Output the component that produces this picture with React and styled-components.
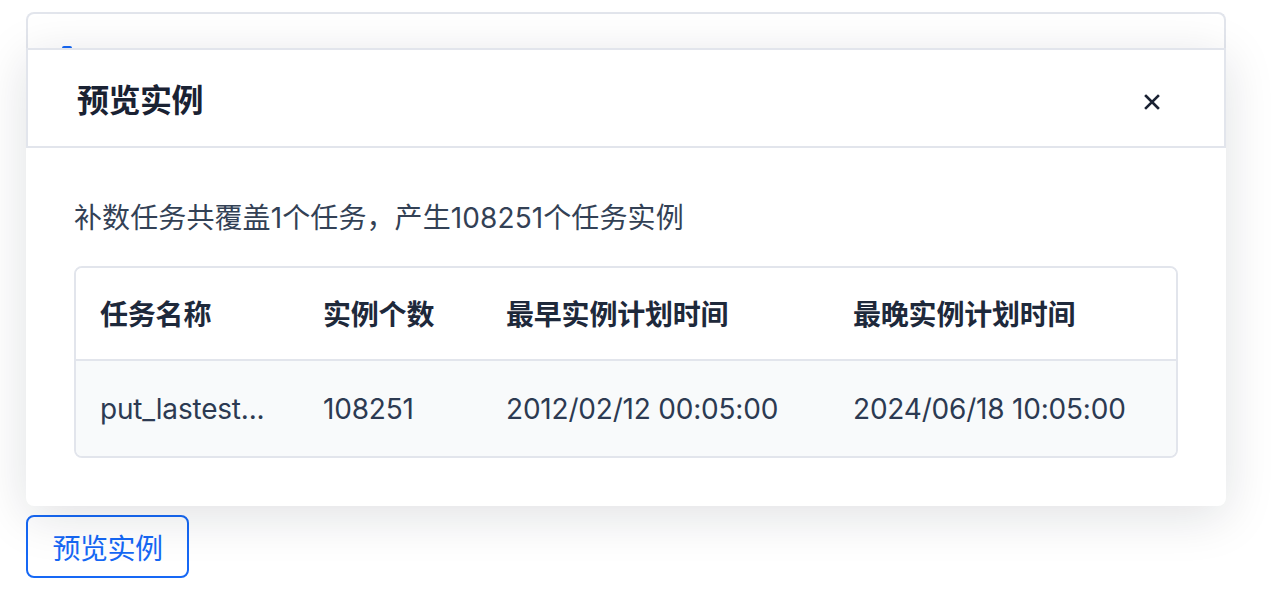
import React from "react";
import styled, { createGlobalStyle } from "styled-components";

const GlobalStyle = createGlobalStyle`
  html, body { margin: 0; padding: 0; background: #ffffff; }
  body {
    font-family: Inter, "Noto Sans CJK SC", "Noto Sans", sans-serif;
    -webkit-font-smoothing: antialiased;
  }
  * { box-sizing: border-box; }
`;

const Page = styled.div`
  width: 1276px;
  height: 606px;
  overflow: hidden;
  padding: 12px 50px 0 26px;
  display: flex;
  flex-direction: column;
  align-items: flex-start;
`;

const CardTop = styled.div`
  width: 1200px;
  height: 36px;
  border: 2px solid #e2e5ec;
  border-bottom: none;
  border-radius: 8px 8px 0 0;
  background: #ffffff;
  display: flex;
  align-items: flex-end;
  padding-left: 34px;
`;

const TabMark = styled.span`
  display: block;
  width: 10px;
  height: 2px;
  border-radius: 2px 2px 0 0;
  background: #1668f5;
`;

const Modal = styled.div`
  position: relative;
  z-index: 2;
  width: 1200px;
  background: #ffffff;
  border-radius: 0 0 8px 8px;
  box-shadow: 0 10px 50px rgba(15, 23, 42, 0.13);
  display: flex;
  flex-direction: column;
`;

const Header = styled.div`
  height: 100px;
  border: 2px solid #e2e5ec;
  padding: 0 48px 0 49px;
  display: flex;
  align-items: center;
  justify-content: space-between;
`;

const Title = styled.h2`
  margin: 0;
  font-size: 32px;
  font-weight: 700;
  color: #1a2233;
  letter-spacing: -0.5px;
`;

const CloseButton = styled.button`
  border: none;
  background: none;
  padding: 0;
  margin-right: 15px;
  margin-top: 8px;
  width: 18px;
  height: 18px;
  display: flex;
  align-items: center;
  justify-content: center;
  cursor: pointer;
  color: #1a2233;
`;

const Body = styled.div`
  padding: 50px 48px 48px 48px;
  display: flex;
  flex-direction: column;
  gap: 28px;
`;

const Summary = styled.p`
  margin: 0;
  font-size: 28px;
  line-height: 40px;
  color: #334155;
  letter-spacing: 0.1px;
`;

const TableBox = styled.div`
  border: 2px solid #e2e5ec;
  border-radius: 8px;
  overflow: hidden;
`;

const Row = styled.div`
  display: grid;
  grid-template-columns: 223px 183px 347px 1fr;
  align-items: center;
  height: ${(p) => (p.$head ? "93px" : "95px")};
  background: ${(p) => (p.$head ? "#ffffff" : "#f8fafb")};
  border-bottom: ${(p) => (p.$head ? "2px solid #e2e5ec" : "none")};
  padding-bottom: ${(p) => (p.$head ? "2px" : "0")};
`;

const Cell = styled.div`
  padding-left: 24px;
  font-size: 28px;
  font-weight: ${(p) => (p.$head ? 700 : 400)};
  color: ${(p) => (p.$head ? "#1e293b" : "#2c3a52")};
  white-space: nowrap;
  letter-spacing: ${(p) => (p.$head ? "-0.2px" : "-0.2px")};
`;

const PreviewButton = styled.button`
  margin-top: 9px;
  width: 163px;
  height: 63px;
  border: 2px solid #1668f5;
  border-radius: 8px;
  background: transparent;
  color: #1668f5;
  font-family: inherit;
  font-size: 28px;
  letter-spacing: -0.5px;
  cursor: pointer;
  padding: 0;
`;

const CloseIcon = () => (
  <svg width="16" height="16" viewBox="0 0 16 16" fill="none">
    <path d="M2 2 L14 14 M14 2 L2 14" stroke="currentColor" strokeWidth="2.6" strokeLinecap="square" />
  </svg>
);

const columns = ["任务名称", "实例个数", "最早实例计划时间", "最晚实例计划时间"];
const rows = [["put_lastest...", "108251", "2012/02/12 00:05:00", "2024/06/18 10:05:00"]];

export default function App() {
  return (
    <>
      <GlobalStyle />
      <Page>
        <CardTop>
          <TabMark />
        </CardTop>
        <Modal>
          <Header>
            <Title>预览实例</Title>
            <CloseButton aria-label="关闭">
              <CloseIcon />
            </CloseButton>
          </Header>
          <Body>
            <Summary>补数任务共覆盖1个任务，产生108251个任务实例</Summary>
            <TableBox>
              <Row $head>
                {columns.map((c) => (
                  <Cell key={c} $head>{c}</Cell>
                ))}
              </Row>
              {rows.map((r, i) => (
                <Row key={i}>
                  {r.map((v, j) => (
                    <Cell key={j}>{v}</Cell>
                  ))}
                </Row>
              ))}
            </TableBox>
          </Body>
        </Modal>
        <PreviewButton>预览实例</PreviewButton>
      </Page>
    </>
  );
}
